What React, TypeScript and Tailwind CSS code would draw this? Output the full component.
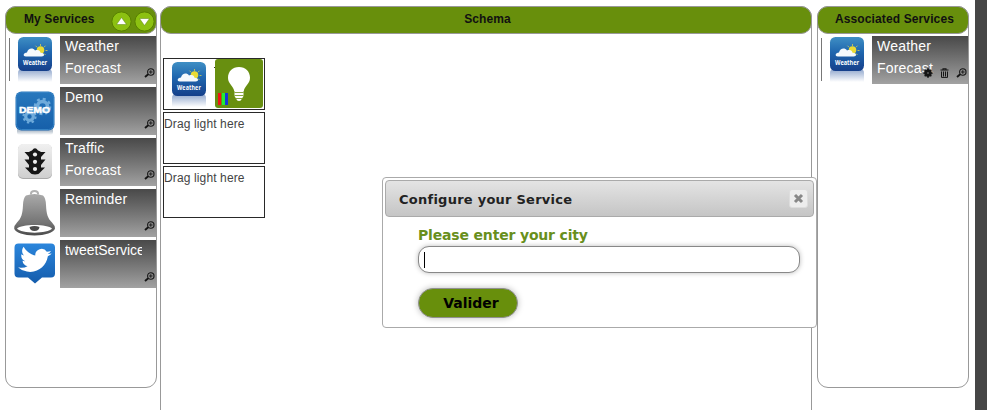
import type { ReactNode } from "react";

function WeatherIcon() {
  return (
    <svg width="36" height="46" viewBox="0 0 36 46" className="block">
      <defs>
        <linearGradient id="sky" x1="0" y1="0" x2="0" y2="1">
          <stop offset="0" stopColor="#3f8fc4" />
          <stop offset="0.45" stopColor="#1f66ae" />
          <stop offset="1" stopColor="#153f8a" />
        </linearGradient>
        <linearGradient id="reflection" x1="0" y1="0" x2="0" y2="1">
          <stop offset="0" stopColor="#8fa6cc" />
          <stop offset="1" stopColor="#ffffff" />
        </linearGradient>
      </defs>
      <path d="M1 46V37Q1 33 5 33H31Q35 33 35 37V46Z" fill="url(#reflection)" />
      <rect x="1" y="1" width="34" height="34" rx="5.500" fill="url(#sky)" />
      <path d="M23.500 8V10M18.500 9.700L20 11.200M28.500 9.700L27 11.200M28.500 14.500H30.500M27 17.500L28.500 19" stroke="#d9d24a" strokeWidth="0.800" />
      <circle cx="23.500" cy="14" r="3.800" fill="#eadb35" />
      <path d="M9 20.500C5.500 20.500 6.200 16.500 10 16.500C11 12 16 11.500 18 14.500C22 13 23.500 15.500 23.500 16.800C27.500 16.500 28.500 20.500 24.500 20.500Z" fill="#f4f9fc" />
      <text x="18" y="28.800" textAnchor="middle" textLength="24" lengthAdjust="spacingAndGlyphs" fontFamily="Open Sans, sans-serif" fontWeight="700" fontSize="6.200" fill="#fff">Weather</text>
    </svg>
  );
}

function DemoIcon() {
  return (
    <svg width="42" height="46" viewBox="0 0 42 46" className="block">
      <defs>
        <linearGradient id="demo" x1="0" y1="0" x2="0" y2="1">
          <stop offset="0" stopColor="#2878bd" />
          <stop offset="1" stopColor="#165fa9" />
        </linearGradient>
        <linearGradient id="demoShade" x1="0" y1="0" x2="0" y2="1">
          <stop offset="0.500" stopColor="#b9c4cf" />
          <stop offset="1" stopColor="#ffffff" />
        </linearGradient>
      </defs>
      <rect x="3" y="36" width="36" height="8" rx="3" fill="url(#demoShade)" />
      <rect x="1.500" y="0.500" width="39" height="39" rx="6" fill="url(#demo)" />
      <rect x="2.500" y="1.500" width="37" height="37" rx="5" fill="none" stroke="#3683c5" />
      <circle cx="28.500" cy="15.500" r="5" fill="none" stroke="#6fabdb" strokeWidth="3.600" />
      <circle cx="28.500" cy="15.500" r="7.600" fill="none" stroke="#6fabdb" strokeWidth="2.400" strokeDasharray="2.980 2.990" />
      <circle cx="15.500" cy="25.500" r="3.800" fill="none" stroke="#6fabdb" strokeWidth="3.200" />
      <circle cx="15.500" cy="25.500" r="6" fill="none" stroke="#6fabdb" strokeWidth="2.200" strokeDasharray="2.350 2.360" />
      <text x="20.500" y="22" textAnchor="middle" textLength="31" lengthAdjust="spacingAndGlyphs" fontFamily="Liberation Sans, sans-serif" fontWeight="700" fontSize="9.500" fill="#fff" stroke="#fff" strokeWidth="0.500">DEMO</text>
    </svg>
  );
}

function TrafficIcon() {
  return (
    <svg width="36" height="38" viewBox="0 0 36 38" className="block">
      <defs>
        <linearGradient id="plate" x1="0" y1="0" x2="0" y2="1">
          <stop offset="0" stopColor="#f0f0f0" />
          <stop offset="1" stopColor="#cfcfcf" />
        </linearGradient>
      </defs>
      <rect x="1" y="1.500" width="34" height="34.500" rx="5" fill="#aaa" />
      <rect x="1" y="1" width="34" height="34" rx="5" fill="url(#plate)" />
      <path d="M12 9Q13 8 15 7.500Q18 3 21 7.500Q23 8 24 9H28.500L24 14V16.500H28.500L24 22V24.500H28L23.500 29Q22 31.500 18 31.500Q14 31.500 12.500 29L8 24.500H12V22L7.500 16.500H12V14L7.500 9Z" fill="#161616" />
      <circle cx="18" cy="11.500" r="2.100" fill="#ececec" />
      <circle cx="18" cy="18.800" r="2.100" fill="#ececec" />
      <circle cx="18" cy="26" r="2.100" fill="#ececec" />
    </svg>
  );
}

function BellIcon() {
  return (
    <svg width="42" height="48" viewBox="0 0 42 48" className="block">
      <defs>
        <linearGradient id="bell" x1="0" y1="0" x2="0" y2="1">
          <stop offset="0" stopColor="#aaaaaa" />
          <stop offset="0.700" stopColor="#747474" />
          <stop offset="1" stopColor="#4b4b4b" />
        </linearGradient>
      </defs>
      <path d="M17 5.500V4.500Q17 2 20.500 2Q24 2 24 4.500V5.500" fill="none" stroke="#b2b2b2" strokeWidth="2" />
      <path d="M12 6.500Q20.500 3.500 29 6.500Q31.800 9 32 16C32.500 25 33.500 29 38 33.500Q41 36.500 41 39.500C40 43.500 31 46.500 20.500 46.500C10 46.500 1 43.500 0.200 39.500Q0 36.500 3 33.500C7.500 29 8.500 25 9 16Q9.200 9 12 6.500Z" fill="url(#bell)" />
      <path d="M3 39.500C7 34.800 34 34.800 38 39.500C34 45 7 45 3 39.500Z" fill="#fff" />
      <path d="M15.500 38Q20.500 36 25.500 38Q25 42 20.500 42Q16 42 15.500 38Z" fill="#4b4b4b" />
    </svg>
  );
}

function TweetIcon() {
  return (
    <svg width="42" height="42" viewBox="0 0 42 42" className="block">
      <defs>
        <linearGradient id="tweet" x1="0" y1="0" x2="0" y2="1">
          <stop offset="0" stopColor="#2b86dc" />
          <stop offset="1" stopColor="#145cac" />
        </linearGradient>
      </defs>
      <path d="M4.500 0.500H37Q41 0.500 41 4.500V30.500Q41 34.500 37 34.500H28L21 40.500L14 34.500H4.500Q0.500 34.500 0.500 30.500V4.500Q0.500 0.500 4.500 0.500Z" fill="url(#tweet)" />
      <path transform="rotate(10 21 17) translate(5.400 2) scale(1.280)" d="M23.953 4.570a10 10 0 01-2.825.775 4.958 4.958 0 002.163-2.723c-.951.555-2.005.959-3.127 1.184a4.920 4.920 0 00-8.384 4.482C7.690 8.095 4.067 6.130 1.640 3.162a4.822 4.822 0 00-.666 2.475c0 1.710.870 3.213 2.188 4.096a4.904 4.904 0 01-2.228-.616v.060a4.923 4.923 0 003.946 4.827 4.996 4.996 0 01-2.212.085 4.936 4.936 0 004.604 3.417 9.867 9.867 0 01-6.102 2.105c-.390 0-.779-.023-1.170-.067a13.995 13.995 0 007.557 2.209c9.053 0 13.998-7.496 13.998-13.985 0-.210 0-.420-.015-.630A9.935 9.935 0 0024 4.590z" fill="#fff" />
    </svg>
  );
}

function LampIcon() {
  return (
    <svg width="48" height="49" viewBox="0 0 48 49" className="block">
      <rect width="48" height="49" rx="3" fill="#688f10" />
      <path d="M24 8C17.500 8 13 12.500 13 18.800C13 25 18.500 27 19.200 32H28.800C29.500 27 35 25 35 18.800C35 12.500 30.500 8 24 8Z" fill="#fff" />
      <path d="M19.500 32H28.500V37L27 39.500Q26 42 24 42Q22 42 21 39.500L19.500 37Z" fill="#fff" />
      <path d="M19.500 33.500H28.500M19.500 36.500H28.500M21 39.500H27" stroke="#688f10" strokeWidth="0.800" />
      <rect x="3" y="34" width="3" height="12" fill="#f01414" />
      <rect x="7" y="34" width="3" height="12" fill="#22ee32" />
      <rect x="10" y="34" width="3" height="12" fill="#1737d6" />
    </svg>
  );
}

function ZoomIcon() {
  return (
    <svg width="11" height="10" viewBox="0 0 11 10" className="block" fill="none" stroke="#151515">
      <circle cx="6.800" cy="4" r="3.200" strokeWidth="1.100" />
      <path d="M5 4H8.600M6.800 2.200V5.800" strokeWidth="0.900" />
      <path d="M4.300 6.300L1 9" strokeWidth="1.900" />
    </svg>
  );
}

function GearIcon() {
  return (
    <svg width="10" height="10" viewBox="0 0 10 10" className="block">
      <circle cx="5" cy="5" r="3.700" fill="#151515" />
      <path d="M5 0.300V9.700M0.300 5H9.700M1.700 1.700L8.300 8.300M8.300 1.700L1.700 8.300" stroke="#151515" strokeWidth="1.600" />
      <circle cx="5" cy="5" r="1.100" fill="#555" />
    </svg>
  );
}

function TrashIcon() {
  return (
    <svg width="9" height="10" viewBox="0 0 9 10" className="block" fill="none" stroke="#151515">
      <path d="M0.500 2H8.500M3 1.800V0.700H6V1.800" strokeWidth="1.100" />
      <path d="M1.500 3.500V9.400H7.500V3.500M3.500 3.500V8.500M5.500 3.500V8.500" strokeWidth="1" />
    </svg>
  );
}

function ArrowButton({ down = false }: { down?: boolean }) {
  return (
    <button className="block">
      <svg width="21" height="21" viewBox="0 0 21 21" className="block">
        <circle cx="10.500" cy="10.500" r="9.600" fill="#8cc111" stroke="#598200" strokeWidth="1" />
        <path d={down ? "M5.500 7.500H15.500L10.500 14.500Z" : "M5.500 13.500H15.500L10.500 6.500Z"} fill="#fff" stroke="#5d8410" strokeWidth="0.500" />
      </svg>
    </button>
  );
}

function Panel({ title, wide = false, tools, children }: { title: string; wide?: boolean; tools?: ReactNode; children: ReactNode }) {
  return (
    <section
      className={
        wide
          ? "h-[420px] w-[652px] shrink-0 rounded-[11px] border border-[#999] bg-white"
          : "h-[382px] w-[152px] shrink-0 rounded-[11px] border border-[#999] bg-white"
      }
    >
      <header
        className={
          tools
            ? "-mx-px -mt-px flex h-7 items-center justify-between rounded-[11px] border border-[#999] bg-[#688f0c] pl-[18px] pr-px text-[12px] font-bold leading-4 tracking-[0.1px] text-[#111]"
            : "-mx-px -mt-px flex h-7 items-center justify-center rounded-[11px] border border-[#999] bg-[#688f0c] pl-[3px] text-[12px] font-bold leading-4 tracking-[0.12px] text-[#111]"
        }
      >
        <h2 className="-mt-0.5">{title}</h2>
        {tools}
      </header>
      {children}
    </section>
  );
}

function Service({ name, icon, actions, marked = false, compact = false }: { name: string; icon: ReactNode; actions?: ReactNode; marked?: boolean; compact?: boolean }) {
  return (
    <div className="flex h-12">
      <div className="flex w-[54px] items-start">
        <div className={marked ? "ml-[3px] mt-0.5 h-[43px] w-px bg-[#777]" : "ml-[3px] h-[43px] w-px"} />
        <div className="flex w-[50px] justify-center">{icon}</div>
      </div>
      <div className="relative h-12 w-24 bg-linear-to-b from-[#494949] to-[#a2a2a2] pl-[5px] text-white">
        <p
          className={
            compact
              ? "-mt-px w-[77px] overflow-hidden text-[14px] leading-[22px] tracking-[-0.03px]"
              : "-mt-px w-[77px] overflow-hidden text-[14px] leading-[22px] tracking-[0.2px]"
          }
        >
          {name}
        </p>
        <div className="absolute bottom-1.5 right-px flex items-center gap-[7px]">
          {actions}
          <ZoomIcon />
        </div>
      </div>
    </div>
  );
}

function DropSlot({ children }: { children: ReactNode }) {
  return <div className="h-[52px] w-[102px] border border-[#292929] text-[12px] leading-[22px] tracking-[0.13px] text-[#444]">{children}</div>;
}

export default function App() {
  return (
    <div className="relative flex h-[410px] w-[987px] overflow-hidden bg-white pl-[5px] pt-1.5 font-['Liberation_Sans',Arial,sans-serif]">
      <Panel title="My Services" tools={<div className="mt-0.5 flex gap-0.5"><ArrowButton /><ArrowButton down /></div>}>
        <div className="flex flex-col gap-[3px] pt-0.5">
          <Service name="Weather Forecast" icon={<WeatherIcon />} marked />
          <Service name="Demo" icon={<div className="pt-1"><DemoIcon /></div>} />
          <Service name="Traffic Forecast" icon={<div className="pt-[5px]"><TrafficIcon /></div>} />
          <Service name="Reminder" icon={<BellIcon />} />
          <Service name="tweetService" icon={<div className="pt-[3px]"><TweetIcon /></div>} compact />
        </div>
      </Panel>

      <div className="ml-[3px]">
        <Panel title="Schema" wide>
          <div className="flex flex-col gap-0.5 pl-0.5 pt-6">
            <DropSlot>
              <div className="flex">
                <div className="ml-[7px] mt-0.5 w-[43px]"><WeatherIcon /></div>
                <div className="mt-2 size-px bg-[#333]" />
                <LampIcon />
              </div>
            </DropSlot>
            <DropSlot>Drag light here</DropSlot>
            <DropSlot>Drag light here</DropSlot>
          </div>
        </Panel>
      </div>

      <div className="ml-[5px]">
        <Panel title="Associated Services">
          <div className="pt-0.5">
            <Service name="Weather Forecast" icon={<WeatherIcon />} marked actions={<><GearIcon /><TrashIcon /></>} />
          </div>
        </Panel>
      </div>

      <aside className="-mt-1.5 ml-1.5 h-[410px] w-3 shrink-0 bg-[#464646]" />

      <div role="dialog" className="absolute left-[382px] top-[177px] h-[151px] w-[435px] rounded-[4px] border border-[#aaa] bg-white p-0.5 font-['DejaVu_Sans',Verdana,sans-serif]">
        <div className="flex h-[37px] items-center justify-between rounded-[4px] border border-[#aaa] bg-linear-to-b from-[#e4e4e4] to-[#c5c5c5] pl-[13px] pr-[5px]">
          <h3 className="mt-0.5 text-[13px] font-bold tracking-[0.25px] text-[#222]">Configure your Service</h3>
          <button className="flex size-[19px] items-center justify-center rounded-[3px] border border-[#ddd] bg-[#ededed]">
            <svg width="11" height="11" viewBox="0 0 11 11" className="block">
              <path d="M2 2L9 9M9 2L2 9" stroke="#888" strokeWidth="3" />
            </svg>
          </button>
        </div>
        <div className="pl-[33px] pt-2">
          <label className="block h-[21px] text-[14px] font-bold leading-5 tracking-[-0.17px] text-[#688f1c]">Please enter your city</label>
          <div className="flex h-[27px] w-[382px] items-center rounded-[11px] border border-[#888] bg-white pl-[5px] shadow-[0_0_5px_#bbb]">
            <div className="h-4 w-px bg-black" />
          </div>
          <button className="mt-[15px] h-[30px] w-[100px] rounded-full border border-[#909090] bg-[#688f0c] pl-1.5 text-[14px] font-bold text-black shadow-[0_0_6px_#bbb]">Valider</button>
        </div>
      </div>
    </div>
  );
}
